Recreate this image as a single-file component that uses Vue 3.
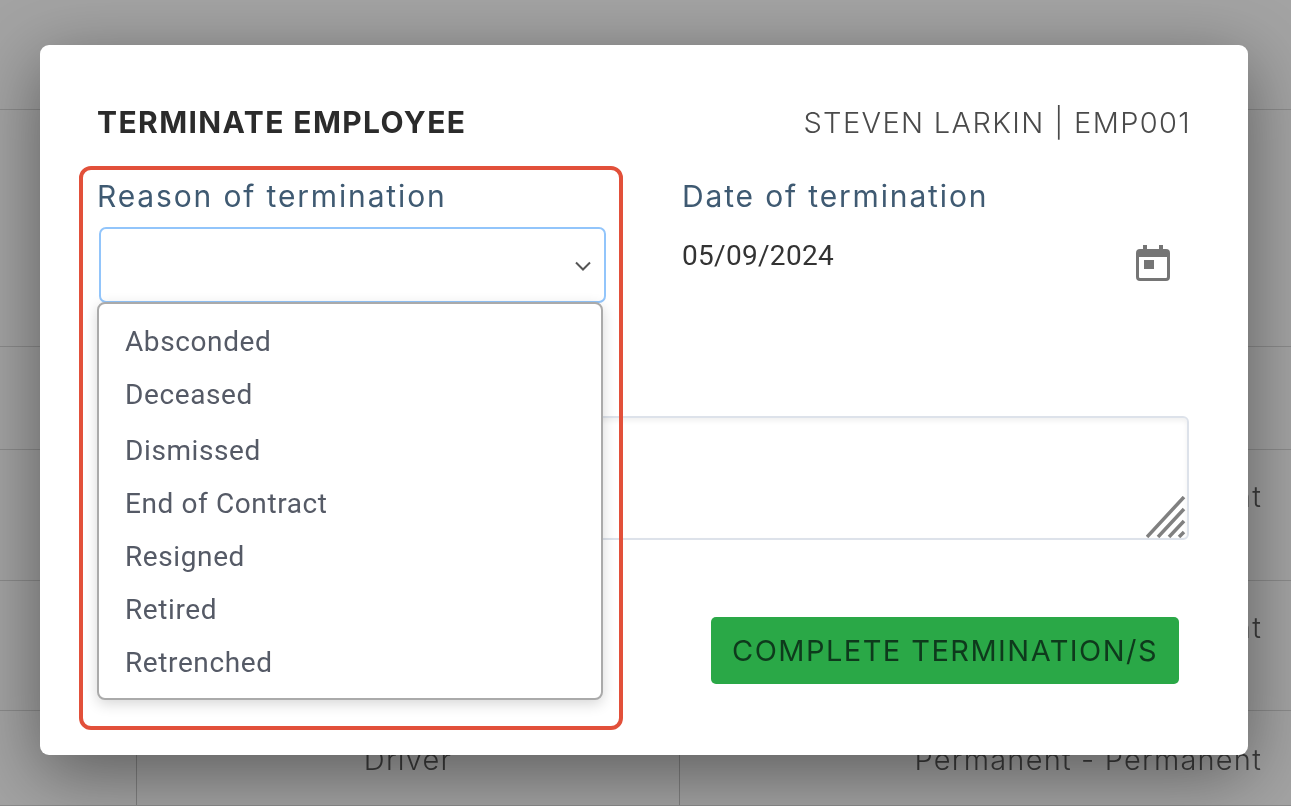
<script setup>
import { ref } from 'vue'

const reasons = ref(['Absconded', 'Deceased', 'Dismissed', 'End of Contract', 'Resigned', 'Retired', 'Retrenched'])

// rows of the table behind the dialog
const rows = [
  { height: 110, type: '' },
  { height: 237, type: '' },
  { height: 103, type: '' },
  { height: 131, type: 'Permanent - Permanent' },
  { height: 130, type: 'Permanent - Permanent' },
  { height: 95, type: 'Permanent - Permanent', job: 'Driver' }
]
</script>

<template>
  <div class="page">
    <div class="table">
      <div v-for="(row, index) in rows" :key="index" class="row" :style="{ height: row.height + 'px' }">
        <div class="cell cell-first"></div>
        <div class="cell cell-job">{{ row.job }}</div>
        <div class="cell cell-type">{{ row.type }}</div>
      </div>
    </div>

    <div class="modal">
      <div class="modal-head">
        <span class="modal-title">TERMINATE EMPLOYEE</span>
        <span class="modal-employee">STEVEN LARKIN | EMP001</span>
      </div>

      <div class="fields">
        <div class="field">
          <label class="label">Reason of termination</label>
          <div class="select">
            <svg class="chevron" width="18" height="12" viewBox="0 0 18 12" fill="none">
              <path d="M2 2.5 9 9.5 16 2.5" stroke="#555" stroke-width="2" />
            </svg>
            <ul class="dropdown">
              <li v-for="reason in reasons" :key="reason" class="option">{{ reason }}</li>
            </ul>
          </div>
        </div>
        <div class="field">
          <label class="label">Date of termination</label>
          <div class="date">
            <span class="date-value">05/09/2024</span>
            <svg class="calendar" width="34" height="36" viewBox="0 0 34 36" fill="none">
              <path d="M7 0h4v4h12V0h4v4h3a4 4 0 0 1 4 4v24a4 4 0 0 1-4 4H4a4 4 0 0 1-4-4V8a4 4 0 0 1 4-4h3z M3 12v20a1 1 0 0 0 1 1h26a1 1 0 0 0 1-1V12z" fill="#757575" fill-rule="evenodd" />
              <rect x="8" y="15" width="10" height="9" fill="#757575" />
            </svg>
          </div>
        </div>
      </div>

      <div class="note">
        <svg class="grip" width="40" height="42" viewBox="0 0 40 42" fill="none">
          <path d="M1 41 38 1M12 41 38 13M23 41 38 25M33 41 38 36" stroke="#808080" stroke-width="3.5" />
        </svg>
      </div>

      <div class="actions">
        <button class="complete" type="button">COMPLETE TERMINATION/S</button>
      </div>

      <div class="highlight"></div>
    </div>
  </div>
</template>

<style>
html, body {
  margin: 0;
  height: 100%;
  overflow: hidden;
}
</style>

<style scoped>
.page {
  position: relative;
  width: 1291px;
  height: 806px;
  overflow: hidden;
  background: #a3a3a3;
  font-family: Inter, "Liberation Sans", sans-serif;
  filter: blur(0.6px);
}

.row {
  display: grid;
  grid-template-columns: 137px 543px 1fr;
  box-sizing: border-box;
  border-bottom: 1px solid #8b8b8b;
}

.cell {
  padding-top: 32px;
  font-size: 29px;
  font-weight: 300;
  letter-spacing: 1.2px;
  line-height: 30px;
  color: #3c3c3c;
}

.row:last-child .cell {
  padding-top: 34px;
}

.cell-first,
.cell-job {
  border-right: 1px solid #7f7f7f;
}

.row:not(:last-child) .cell {
  border-right: 0;
}

.cell-job {
  text-align: center;
}

.cell-type {
  text-align: right;
  padding-right: 29px;
}

.modal {
  position: absolute;
  left: 40px;
  top: 45px;
  width: 1208px;
  height: 710px;
  box-sizing: border-box;
  padding: 57px 57px 0;
  background: #fff;
  border-radius: 9px;
  box-shadow: 0 18px 70px rgba(0, 0, 0, 0.44);
}

.modal-head {
  display: flex;
  justify-content: space-between;
  align-items: center;
  height: 40px;
}

.modal-title {
  font-size: 30px;
  font-weight: 700;
  letter-spacing: 1.4px;
  color: #2b2b2b;
}

.modal-employee {
  font-size: 29px;
  font-weight: 300;
  letter-spacing: 1.35px;
  color: #4a4a4a;
}

.fields {
  display: grid;
  grid-template-columns: 509px 509px;
  gap: 76px;
  margin-top: 34px;
}

.label {
  display: block;
  height: 40px;
  margin-bottom: 11px;
  font-size: 30px;
  line-height: 40px;
  letter-spacing: 1.85px;
  color: #3f5a72;
}

.select {
  position: relative;
  box-sizing: border-box;
  width: 507px;
  height: 76px;
  margin-left: 2px;
  border: 2px solid #92c5fb;
  border-radius: 7px;
}

.chevron {
  position: absolute;
  right: 12px;
  top: 31px;
}

.dropdown {
  position: absolute;
  left: -4px;
  top: 73px;
  box-sizing: border-box;
  width: 506px;
  height: 398px;
  margin: 0;
  padding: 11px 0 0 26px;
  list-style: none;
  background: #fff;
  border: 2px solid #aaa;
  border-radius: 8px;
  box-shadow: 0 4px 14px rgba(0, 0, 0, 0.16);
  z-index: 2;
}

.option {
  height: 53px;
  font-family: Roboto, "Liberation Sans", sans-serif;
  font-size: 28px;
  letter-spacing: 0.6px;
  line-height: 53px;
  color: #555a66;
}

.option:nth-child(3) {
  margin-top: 3px;
}

.date {
  display: flex;
  justify-content: space-between;
  height: 76px;
}

.date-value {
  margin-top: 11px;
  font-family: Roboto, sans-serif;
  font-size: 28px;
  line-height: 36px;
  letter-spacing: 0.3px;
  color: #333;
}

.calendar {
  margin: 18px 21px 0 0;
}

.note {
  position: relative;
  box-sizing: border-box;
  height: 124px;
  margin: 113px 2px 0 0;
  border: 2px solid #dde2ea;
  border-radius: 6px;
  box-shadow: inset 0 3px 5px rgba(0, 0, 0, 0.06);
}

.grip {
  position: absolute;
  right: 1px;
  bottom: 0;
}

.actions {
  display: flex;
  justify-content: flex-end;
  margin: 77px 12px 0 0;
}

.complete {
  width: 468px;
  height: 67px;
  padding: 0;
  border: 0;
  border-radius: 5px;
  background: #2aa847;
  font-family: inherit;
  font-size: 29px;
  letter-spacing: 1.45px;
  color: #0e3a1c;
}

.highlight {
  position: absolute;
  left: 39px;
  top: 121px;
  box-sizing: border-box;
  width: 544px;
  height: 564px;
  border: 4px solid #e2503a;
  border-radius: 12px;
  pointer-events: none;
  z-index: 3;
}
</style>
